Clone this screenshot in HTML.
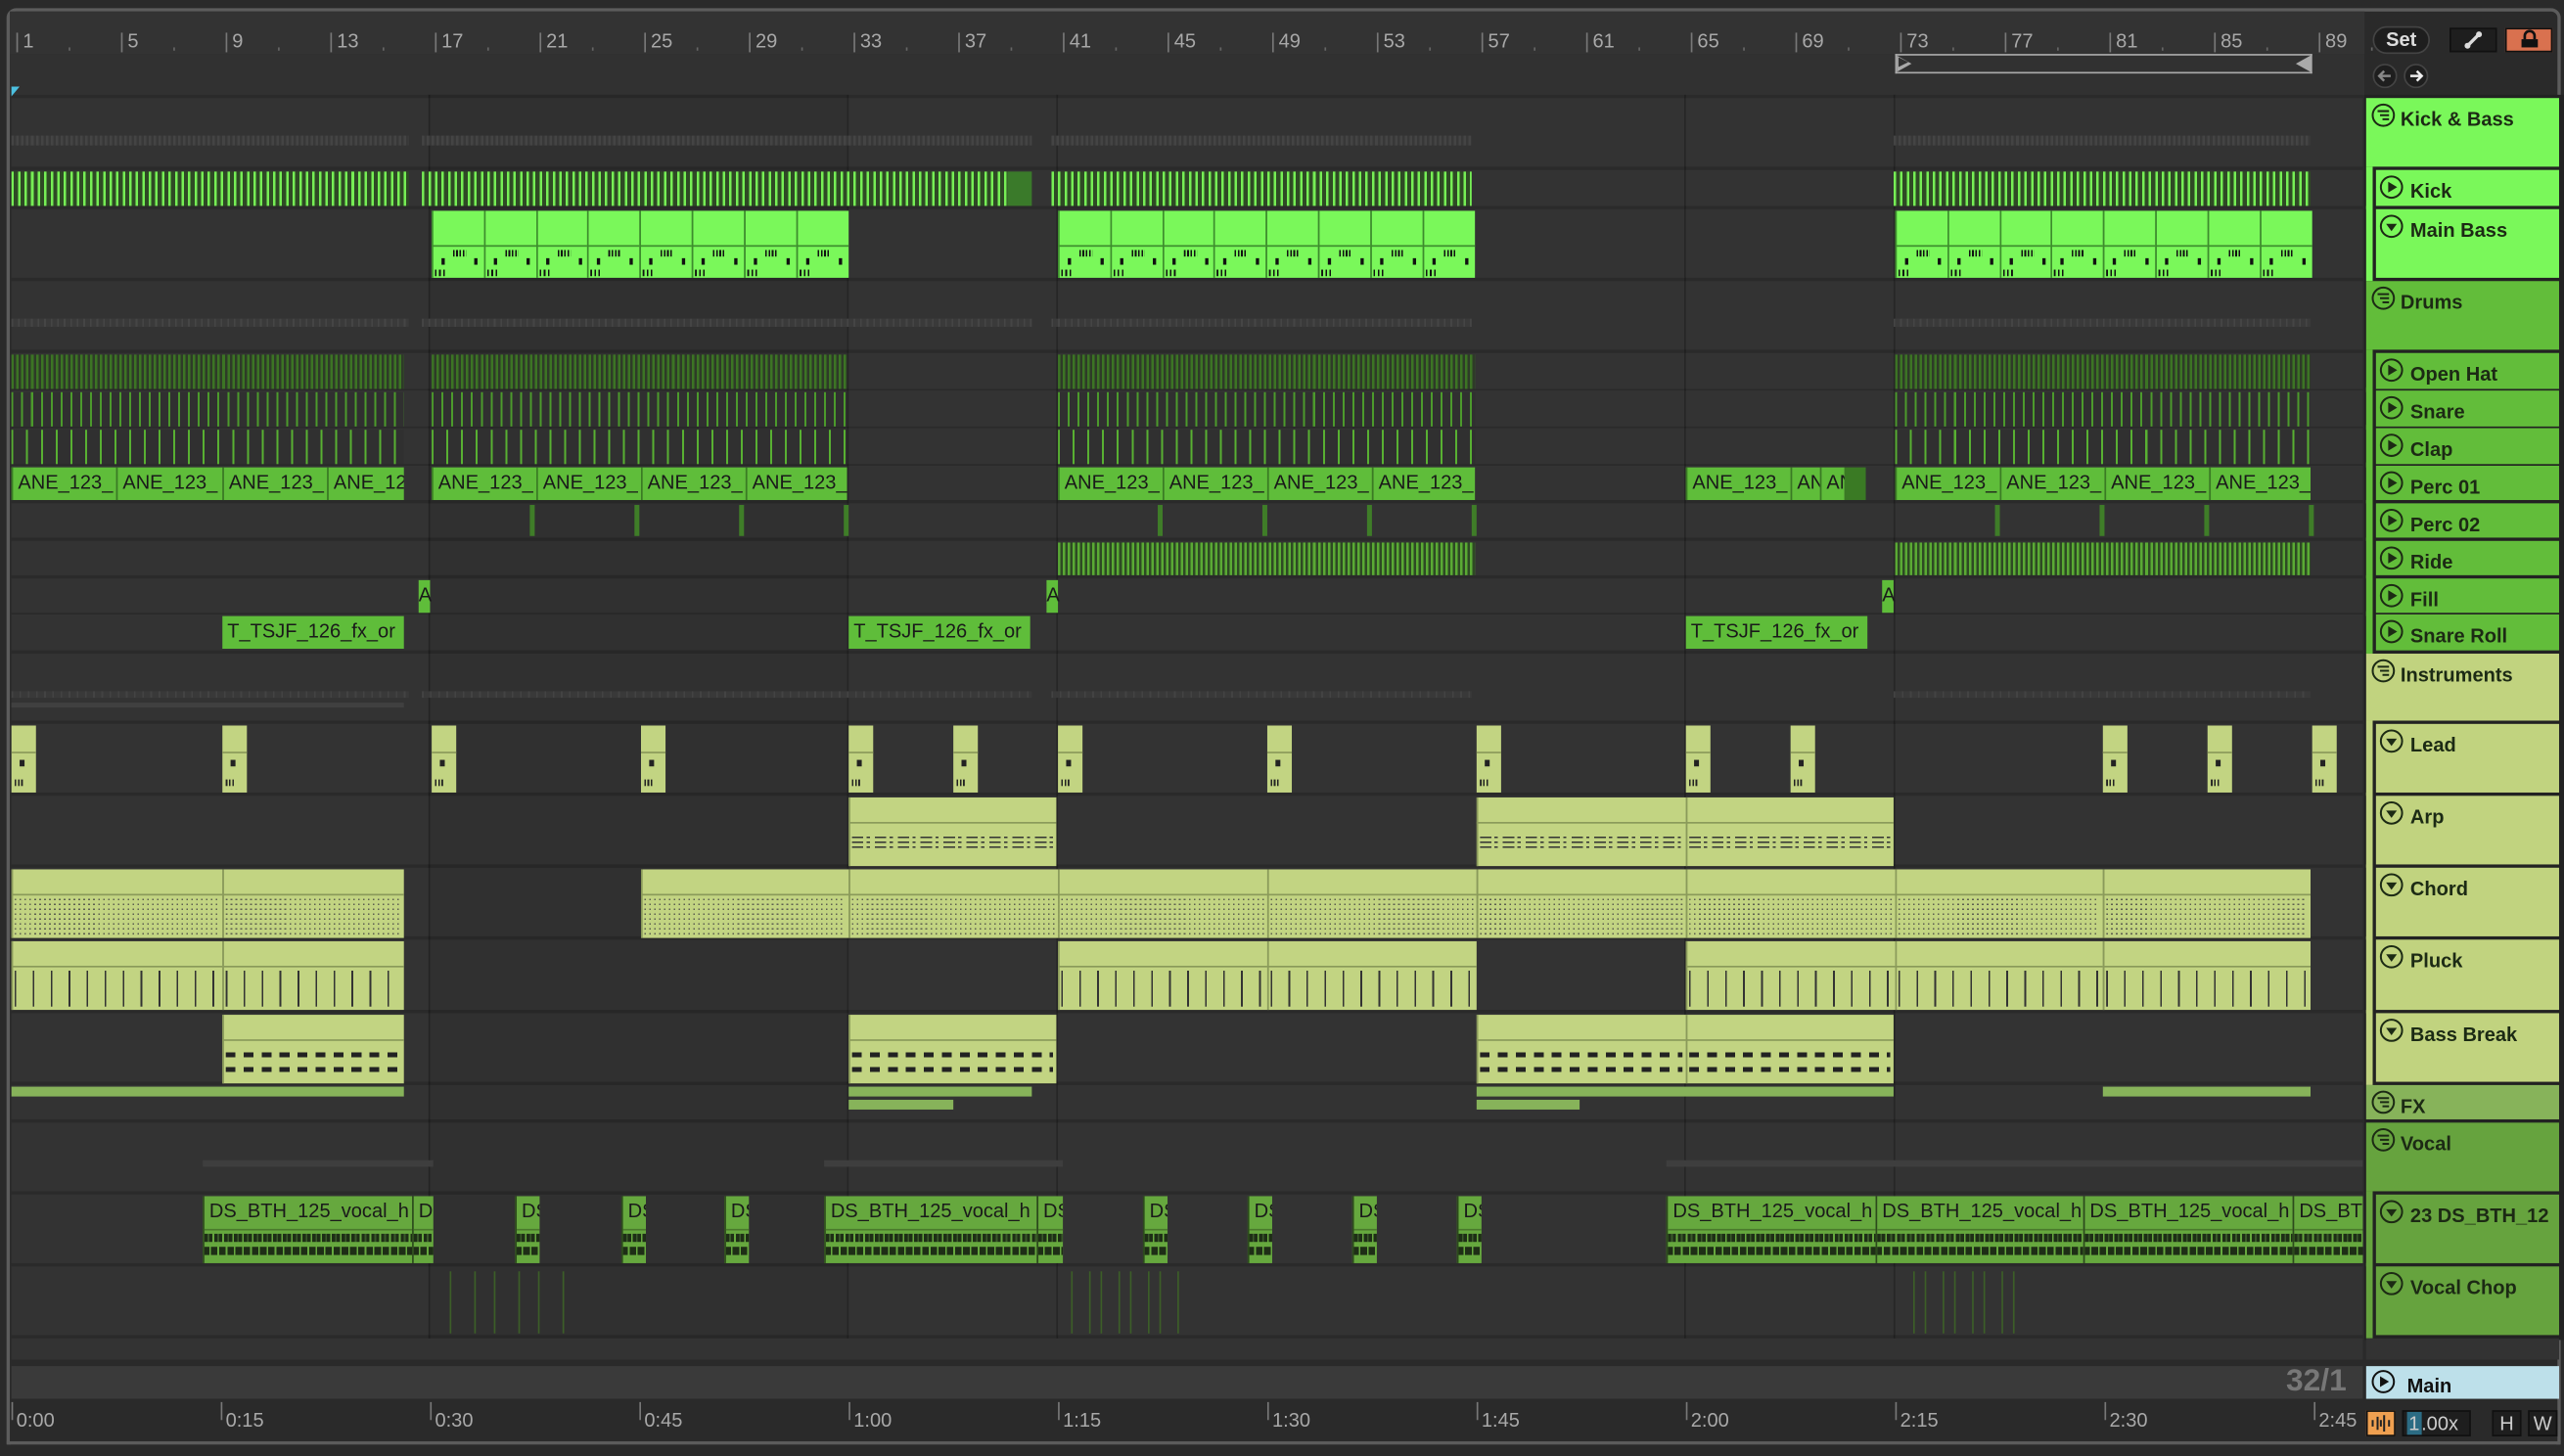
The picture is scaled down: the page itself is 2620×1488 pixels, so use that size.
<!DOCTYPE html>
<html><head><meta charset="utf-8"><style>
html,body{margin:0;padding:0;background:#2a2a2a;width:2620px;height:1488px;overflow:hidden}
#c{position:absolute;left:0;top:0;width:1568px;height:891px;transform:scale(1.67092,1.67003);transform-origin:0 0;background:#2a2a2a;font-family:"Liberation Sans",sans-serif}
#c div{position:absolute;box-sizing:border-box}
.lbl{font-size:12px;color:#1a1a1a;white-space:nowrap;overflow:hidden;padding-left:3px;line-height:15px}
.hd{font-size:12px;font-weight:bold;color:#1c2a14;white-space:nowrap;overflow:hidden}
.rul{font-size:12px;color:#a8a8a8}
</style></head><body><div id="c"></div>
<script>
const C=document.getElementById('c');
function b(x,y,w,h,st,html){const d=document.createElement('div');d.style.cssText=`left:${x}px;top:${y}px;width:${w}px;height:${h}px;`+(st||'');if(html)d.innerHTML=html;C.appendChild(d);return d;}
b(4,5,1562,883,'border:2px solid #5c5c5c;border-radius:6px;background:#2a2a2a');
b(6,7,1440,26,'background:#333');
b(6,33,1440,25,'background:#313131');
for(let n=1;n<=89;n+=4){const x=10+(n-1)*16;b(x,20,1,12,'background:#777');b(x+4,16,30,16,'',`<span class="rul">${n}</span>`);b(x+16*2,29,1,2,'background:#666');}
b(1159,33,255,12,'border-top:1px solid #aaa;border-bottom:1px solid #aaa');
b(1159,33,1,12,'background:#aaa');b(1413,33,1,12,'background:#aaa');
b(1160,34,0,0,'border-left:9px solid #aaa;border-top:5px solid transparent;border-bottom:5px solid transparent');
b(1404,34,0,0,'border-right:9px solid #aaa;border-top:5px solid transparent;border-bottom:5px solid transparent');
b(1161,35,0,0,'border-left:6px solid #333;border-top:3px solid transparent;border-bottom:3px solid transparent');
b(7,53,0,0,'border-top:6px solid #4cc0e0;border-right:5px solid transparent');
b(1451,16,35,17,'background:#1e1e1e;border-radius:9px;border:1px solid #444;color:#ddd;font-size:12px;font-weight:bold;text-align:center;line-height:15px','Set');
b(1498,17,29,15,'background:#1e1e1e;border:1px solid #111','<svg width="27" height="13"><path d="M10 10 L17 3" stroke="#ddd" stroke-width="2"/><circle cx="10" cy="10" r="1.8" fill="#ddd"/><circle cx="17" cy="3" r="1.8" fill="#ddd"/></svg>');
b(1532,17,29,15,'background:#d9714f;border:1px solid #111','<svg width="27" height="13"><rect x="9" y="6" width="10" height="5" fill="#111"/><path d="M11 6 V4 a3 3 0 0 1 6 0 V6" stroke="#111" stroke-width="1.6" fill="none"/></svg>');
b(1451,39,15,15,'background:#1e1e1e;border-radius:50%;border:1px solid #444','<svg width="13" height="13"><path d="M10 6.5H3M6 3.5L3 6.5L6 9.5" stroke="#888" stroke-width="1.5" fill="none"/></svg>');
b(1470,39,15,15,'background:#1e1e1e;border-radius:50%;border:1px solid #444','<svg width="13" height="13"><path d="M3 6.5H10M7 3.5L10 6.5L7 9.5" stroke="#eee" stroke-width="1.5" fill="none"/></svg>');

const ICON={
g:'<svg width="15" height="15"><circle cx="7.5" cy="7.5" r="6.5" stroke="#1c2a14" stroke-width="1.2" fill="none"/><path d="M4 5H11M5.5 7.5H11M7 10H11" stroke="#1c2a14" stroke-width="1.2"/></svg>',
p:'<svg width="15" height="15"><circle cx="7.5" cy="7.5" r="6.5" stroke="#1c2a14" stroke-width="1.2" fill="none"/><path d="M5.5 4.2L11 7.5L5.5 10.8Z" fill="#1c2a14"/></svg>',
d:'<svg width="15" height="15"><circle cx="7.5" cy="7.5" r="6.5" stroke="#1c2a14" stroke-width="1.2" fill="none"/><path d="M4.2 6L10.8 6L7.5 10.5Z" fill="#1c2a14"/></svg>'};
const G1='#7af85a',G2='#62bd3a',G3='#c1d37f',G4='#87b35a',G5='#66a33e';
const rows=[
[60,42,'g','Kick & Bass',G1],[104,22,'p','Kick',G1],[128,42,'d','Main Bass',G1],
[172,42,'g','Drums',G2],[216,22,'p','Open Hat',G2],[239,22,'p','Snare',G2],[262,22,'p','Clap',G2],[285,21,'p','Perc 01',G2],[308,21,'p','Perc 02',G2],[331,21,'p','Ride',G2],[354,21,'p','Fill',G2],[376,22,'p','Snare Roll',G2],
[400,41,'g','Instruments',G3],[443,42,'d','Lead',G3],[487,42,'d','Arp',G3],[531,42,'d','Chord',G3],[575,43,'d','Pluck',G3],[620,42,'d','Bass Break',G3],
[664,21,'g','FX',G4],[687,42,'g','Vocal',G5],[731,42,'d','23 DS_BTH_12',G5],[775,42,'d','Vocal Chop',G5]];
b(1446,58,122,762,'background:#222');
rows.forEach(r=>{const[y,h,t,n,col]=r;
 b(7,y,1438,h,'background:#333');
 if(t=='g'){b(1447,y,118,h,'background:'+col);b(1450,y+3,15,15,'',ICON.g);b(1468,y+4,95,15,'','<span class="hd">'+n+'</span>');}
 else{b(1447,y-2,4,h+4,'background:'+col);b(1453,y,112,h,'background:'+col);b(1455,y+3,15,15,'',ICON[t]);b(1474,y+4,90,15,'','<span class="hd">'+n+'</span>');}
});
b(7,819,1438,13,'background:#333');b(1447,819,118,13,'background:#333');
b(7,836,1438,20,'background:#3a3a3a');
b(1398,835,45,20,'color:#777;font-size:19px;font-weight:bold','32/1');
b(1447,836,118,20,'background:#bde0ea');b(1450,838,15,15,'',ICON.p.replace(/#1c2a14/g,'#111'));b(1472,839,60,15,'','<span class="hd" style="color:#111">Main</span>');
b(262,58,256,761,'background:rgba(0,0,0,0.05)');
[262,518,646,1030,1158].forEach(x=>b(x,58,1,761,'background:rgba(0,0,0,0.25)'));
['0:00','0:15','0:30','0:45','1:00','1:15','1:30','1:45','2:00','2:15','2:30','2:45'].forEach((t,i)=>{const x=7+i*128;b(x,858,1,11,'background:#777');b(x+3,860,40,14,'',`<span class="rul">${t}</span>`);});
b(1447,863,18,16,'background:#f0a050;border:1px solid #111','<svg width="16" height="14"><path d="M3 5V9M6 3V11M8 5V9M10 2V12M13 5V9" stroke="#222" stroke-width="1.2"/></svg>');
b(1469,863,42,16,'background:#1e1e1e;border:1px solid #111;color:#ccc;font-size:12px;line-height:14px;padding-left:2px','<span style="background:#2c6c84;padding:0 1px">1</span>.00x');
b(1524,863,18,16,'background:#1e1e1e;border:1px solid #111;color:#ccc;font-size:12px;text-align:center;line-height:14px','H');
b(1546,863,18,16,'background:#1e1e1e;border:1px solid #111;color:#ccc;font-size:12px;text-align:center;line-height:14px','W');
b(0,884,1568,7,'background:#2a2a2a');b(4,882,1562,2,'background:#5c5c5c');

function stripes(x1,x2,y,h,c1,c2,p,w){b(x1,y,x2-x1,h,`background:repeating-linear-gradient(90deg,${c1} 0 ${w}px,${c2} ${w}px ${p}px)`);}
[[7,250],[258,631],[643,900],[1158,1413]].forEach(([a,c])=>{stripes(a,c,83,6,'#444','#383838',3,1.5);stripes(a,c,195,5,'#454545','#3a3a3a',4,1);stripes(a,c,423,4,'#434343','#393939',5,1);});
stripes(7,247,430,3,'#404040','#404040',2,1);
[[7,250],[258,616],[643,900],[1158,1413]].forEach(([a,c])=>stripes(a,c,105,21,'#76ee55','#2f4a25',4,1.5));
b(616,105,15,21,'background:#3a7a2a');
[264,647,1159].forEach(x=>{for(let i=0;i<8;i++){const cx=x+i*31.8;b(cx,129,32,41,'background:#7af85a;border-left:1px solid #3d8c2d');b(cx,150,32,1,'background:#3d8c2d');b(cx+13,153,8,4,'background:repeating-linear-gradient(90deg,#111 0 1px,transparent 1px 2px)');b(cx+6,158,2,4,'background:#111');b(cx+26,158,2,4,'background:#111');b(cx+2,165,6,4,'background:repeating-linear-gradient(90deg,#111 0 1px,transparent 1px 2.5px)');}});
[[7,247],[264,518],[647,902],[1159,1413]].forEach(([a,c])=>{stripes(a,c,217,21,'#3c7424','#2e3b28',3,1.5);stripes(a,c,240,21,'#4c9a2c','#303030',6,1.2);stripes(a,c,263,21,'#58b032','#303030',9,1.2);});
[[647,902],[1159,1413]].forEach(([a,c])=>stripes(a,c,332,20,'#5aaa34','#2e4a24',3,1.5));
[[7,71,'ANE_123_'],[71,136,'ANE_123_'],[136,200,'ANE_123_'],[200,247,'ANE_12'],[264,328,'ANE_123_'],[328,392,'ANE_123_'],[392,456,'ANE_123_'],[456,518,'ANE_123_'],[647,711,'ANE_123_'],[711,775,'ANE_123_'],[775,839,'ANE_123_'],[839,902,'ANE_123_'],[1031,1095,'ANE_123_'],[1095,1113,'AN'],[1113,1128,'AN'],[1159,1223,'ANE_123_'],[1223,1287,'ANE_123_'],[1287,1351,'ANE_123_'],[1351,1413,'ANE_123_']].forEach(([a,c,t])=>b(a,286,c-a,20,'background:#5fbd3a;border-left:1px solid #3a7a24','<div class="lbl" style="top:2px;width:100%">'+t+'</div>'));
b(1128,286,13,20,'background:#3a7a24');
[324,388,452,516,708,772,836,900,1220,1284,1348,1412].forEach(x=>b(x,309,3,19,'background:#3f7d28'));
[256,640,1151].forEach(x=>b(x,355,7,20,'background:#5fbd3a','<div class="lbl" style="padding:0;top:2px">A</div>'));
[136,519,1031].forEach(x=>b(x,377,111,20,'background:#5fbd3a','<div class="lbl" style="top:2px;width:100%">T_TSJF_126_fx_or</div>'));
const P='#c2d482';
[7,136,264,392,519,583,647,775,903,1031,1095,1286,1350,1414].forEach(x=>{b(x,444,15,41,'background:'+P);b(x,460,15,1,'background:#8a9a5a');b(x+5,465,3,4,'background:#222');b(x+2,477,5,4,'background:repeating-linear-gradient(90deg,#222 0 1px,transparent 1px 2px)');});
function ic(a,c,y,pat){b(a,y,c-a,42,'background:'+P+';border-left:1px solid #8a9a5a');b(a,y+15,c-a,1,'background:#8a9a5a');b(a+2,y+18,c-a-4,22,pat);}
[[519,646],[903,1031],[1031,1158]].forEach(([a,c])=>ic(a,c,488,'background:repeating-linear-gradient(90deg,#333 0 7px,transparent 7px 9px,#333 9px 11px,transparent 11px 14px);-webkit-mask:linear-gradient(180deg,transparent 0 6px,#000 6px 7px,transparent 7px 9px,#000 9px 10px,transparent 10px 12px,#000 12px 13px,transparent 13px)'));
[[7,136],[136,247],[392,519],[519,647],[647,775],[775,903],[903,1031],[1031,1159],[1159,1286],[1286,1413]].forEach(([a,c])=>ic(a,c,532,'background:repeating-linear-gradient(90deg,#444 0 1px,transparent 1px 3px);-webkit-mask:repeating-linear-gradient(180deg,#000 0 1px,transparent 1px 3px);opacity:.8'));
[[7,136],[136,247],[647,775],[775,903],[1031,1159],[1159,1286],[1286,1413]].forEach(([a,c])=>{ic(a,c,576,'background:repeating-linear-gradient(90deg,#333 0 1px,transparent 1px 11px)');});
[[136,247],[519,646],[903,1031],[1031,1158]].forEach(([a,c])=>ic(a,c,621,'background:repeating-linear-gradient(90deg,#222 0 6px,transparent 6px 11px);-webkit-mask:linear-gradient(180deg,transparent 0 5px,#000 5px 8px,transparent 8px 14px,#000 14px 17px,transparent 17px)'));
b(7,665,240,6,'background:'+G4);b(519,665,112,6,'background:'+G4);b(519,673,64,6,'background:'+G4);b(903,665,255,6,'background:'+G4);b(903,673,63,6,'background:'+G4);b(1286,665,127,6,'background:'+G4);
[[124,265],[504,650],[1019,1445]].forEach(([a,c])=>b(a,710,c-a,4,'background:#3e3e3e'));
[[124,252,'DS_BTH_125_vocal_h'],[252,265,'DS'],[315,330,'DS'],[380,395,'DS'],[443,458,'DS'],[504,634,'DS_BTH_125_vocal_h'],[634,650,'DS'],[699,714,'DS'],[763,778,'DS'],[827,842,'DS'],[891,906,'DS'],[1019,1147,'DS_BTH_125_vocal_h'],[1147,1274,'DS_BTH_125_vocal_h'],[1274,1402,'DS_BTH_125_vocal_h'],[1402,1445,'DS_BTH']].forEach(([a,c,t])=>{b(a,732,c-a,41,'background:#66a83e;border-left:1px solid #2c4a1c','<div class="lbl" style="top:2px;width:100%">'+t+'</div>');b(a+1,752,c-a-1,1,'background:#4a7a2c');b(a+1,755,c-a-1,5,'background:repeating-linear-gradient(90deg,#1e2e16 0 2px,#3a5a2a 2px 3px,#1e2e16 3px 5px,transparent 5px 6px)');b(a+1,763,c-a-1,5,'background:repeating-linear-gradient(90deg,#1e2e16 0 3px,transparent 3px 4px,#1e2e16 4px 5px)');});
[[275,345],[655,725],[1170,1240]].forEach(([a,c])=>{for(let x=a;x<c;x+=7+((x*7)%9))b(x,778,1,38,'background:#3c5e28');});
</script></body></html>
